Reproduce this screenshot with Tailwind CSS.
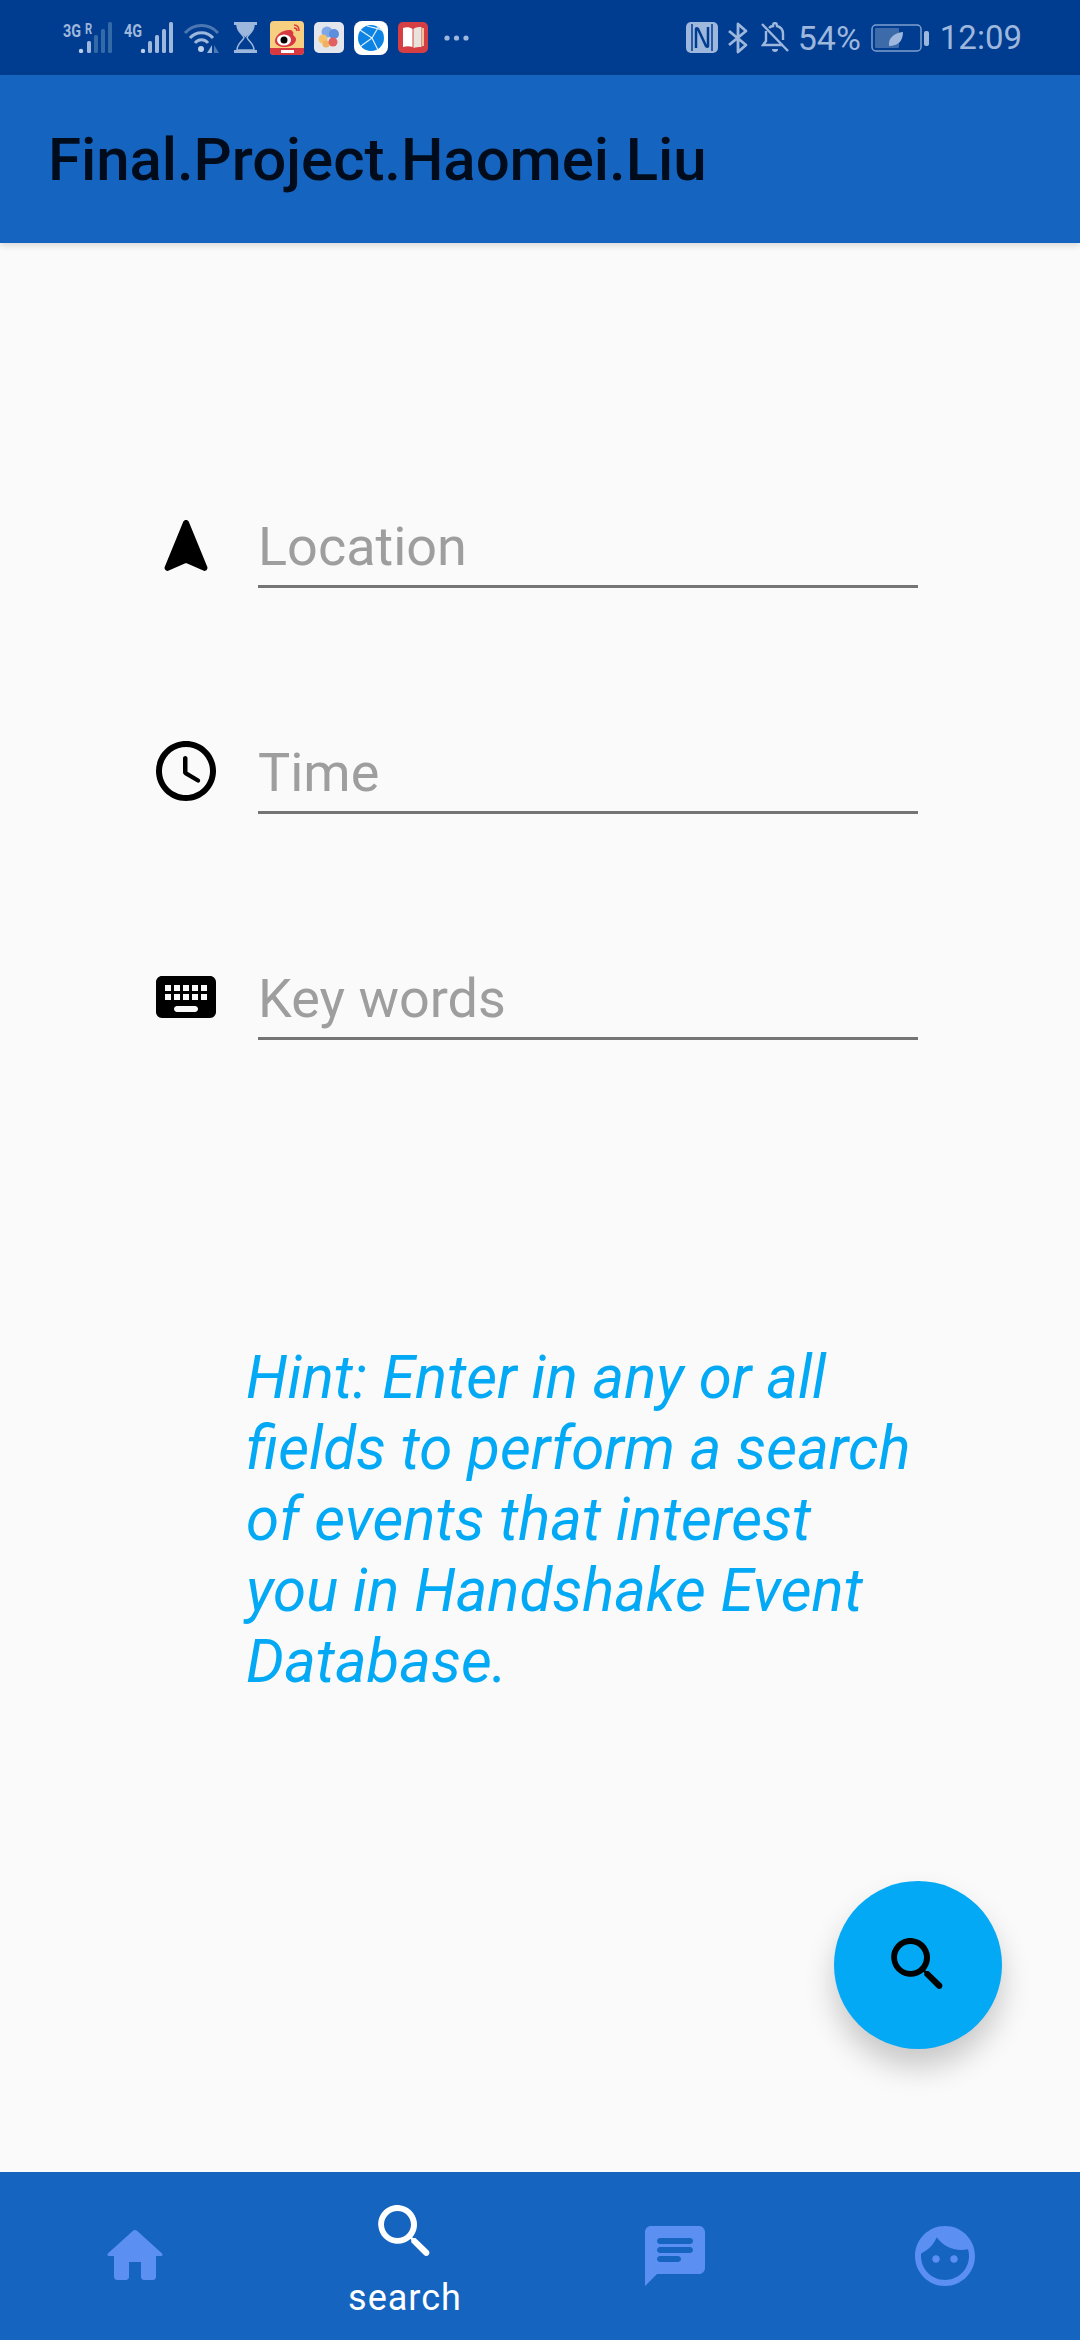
<!DOCTYPE html>
<html>
<head>
<meta charset="utf-8">
<script src="https://cdn.jsdelivr.net/npm/@tailwindcss/browser@4"></script>
</head>
<body class="m-0">
<div class="relative flex h-[2340px] w-[1080px] flex-col overflow-hidden bg-[#fafafa] font-['Roboto',sans-serif]">
  <!-- status bar -->
  <div class="flex h-[75px] shrink-0 items-center justify-between bg-[#003c8f] pl-[63px] pr-[58px] text-[#9db7dd]">
    <div class="flex items-center">
      <div class="relative h-[31px] w-[49px]">
        <span class="absolute left-0 top-0 origin-left scale-x-[0.8] text-[18px] font-bold leading-[18px]">3G</span>
        <span class="absolute left-[22px] top-0 origin-left scale-x-[0.8] text-[14px] font-bold leading-[14px]">R</span>
        <svg width="49" height="31" viewBox="0 0 49 31">
          <circle cx="18" cy="29" r="2.200" fill="#bcd0ea"/><rect x="24" y="19" width="4" height="12" rx="1.500" fill="#9db7dd"/><rect x="31" y="13" width="4" height="18" rx="1.500" fill="#356aa8"/><rect x="38" y="7" width="4" height="24" rx="1.500" fill="#356aa8"/><rect x="45" y="0" width="4" height="31" rx="1.500" fill="#356aa8"/>
        </svg>
      </div>
      <div class="relative ml-[12px] h-[31px] w-[49px]">
        <span class="absolute left-0 top-0 origin-left scale-x-[0.8] text-[18px] font-bold leading-[18px]">4G</span>
        <svg width="49" height="31" viewBox="0 0 49 31">
          <circle cx="19" cy="29" r="2.200" fill="#bcd0ea"/><rect x="24" y="19" width="4" height="12" rx="1.500" fill="#9db7dd"/><rect x="31" y="13" width="4" height="18" rx="1.500" fill="#9db7dd"/><rect x="38" y="7" width="4" height="24" rx="1.500" fill="#9db7dd"/><rect x="45" y="0" width="4" height="31" rx="1.500" fill="#9db7dd"/>
        </svg>
      </div>
      <svg width="37" height="31" viewBox="0 0 37 31" class="ml-[10px]" fill="none">
        <path d="M2 11 A22 22 0 0 1 35 11" stroke="#4b78b2" stroke-width="3"/>
        <path d="M7 16 A15 15 0 0 1 30 16" stroke="#9db7dd" stroke-width="3"/>
        <path d="M12 21 A8 8 0 0 1 25 21" stroke="#9db7dd" stroke-width="3"/>
        <circle cx="18" cy="27" r="3" fill="#bcd0ea"/>
        <path d="M29 23v8h-5z" fill="#9db7dd"/><path d="M31 23v8h5z" fill="#4b78b2"/>
      </svg>
      <svg width="23" height="31" viewBox="0 0 23 31" class="ml-[14px]" fill="none">
        <rect x="0" y="0" width="23" height="3" fill="#9db7dd"/><rect x="0" y="28" width="23" height="3" fill="#9db7dd"/>
        <path d="M3 3h17c0 7-6 9-7 12.500 1 3.500 7 6 7 12.500H3c0-6.500 6-9 7-12.500C9 12 3 10 3 3z" stroke="#9db7dd" stroke-width="1.500"/>
        <path d="M3 3h17c0 7-6 9-8.500 12.500C9 12 3 10 3 3z" fill="#9db7dd"/>
      </svg>
      <svg width="34" height="34" viewBox="0 0 34 34" class="ml-[13px]">
        <rect width="34" height="34" rx="4" fill="#f7cf80"/>
        <path d="M0 27h34v3a4 4 0 0 1-4 4H4a4 4 0 0 1-4-4z" fill="#d8383f"/>
        <rect x="11" y="29" width="13" height="3" fill="#fff"/>
        <path d="M21 9c-8-1-16 5-16 11 0 4 5 6 10 6 7 0 11-4 11-8 0-2-2-3-3-4 1-2 0-4-2-5z" fill="#d8383f"/>
        <ellipse cx="14" cy="19" rx="7" ry="5.500" fill="#fff"/><circle cx="14" cy="19" r="3.500" fill="#000"/>
        <path d="M24 4c3 0 5 2 5 6M24 7c1.500 0 3 1 3 3" stroke="#d8383f" stroke-width="1.500" fill="none"/>
      </svg>
      <svg width="30" height="31" viewBox="0 0 30 31" class="ml-[10px]">
        <rect width="30" height="31" rx="5" fill="#e3e6ec"/>
        <circle cx="13" cy="10" r="5.500" fill="#7fa7e8"/><circle cx="20" cy="12" r="5" fill="#5b8fdc"/>
        <circle cx="9" cy="17" r="4.500" fill="#f5c26b"/><circle cx="12" cy="22" r="3.500" fill="#f0b060"/>
        <circle cx="19" cy="20" r="4.500" fill="#e2605f"/>
      </svg>
      <svg width="34" height="34" viewBox="0 0 34 34" class="ml-[10px]" fill="none">
        <rect width="34" height="34" rx="8" fill="#fff"/>
        <circle cx="17" cy="17" r="13" fill="#0d84e3"/>
        <path d="M6 9l12 8-11 8M18 17l7-12M18 17l6 12M13 5c6 2 12 2 16 5" stroke="#dff0ff" stroke-width="1.200"/>
      </svg>
      <svg width="30" height="31" viewBox="0 0 30 31" class="ml-[10px]">
        <rect width="30" height="31" rx="5" fill="#d53e43"/>
        <path d="M5 6c3-1 7-1 9.500 1v18C12 24 8 24 5 25z" fill="#fff"/>
        <path d="M15.500 7c2-2 6-2 8-2v20c-3 0-6 0-8 1z" fill="#e8e4dc"/>
        <rect x="24" y="6" width="2" height="18" fill="#f2c39a"/>
      </svg>
      <svg width="25" height="6" viewBox="0 0 25 6" class="ml-[16px]" fill="#9db7dd"><circle cx="3" cy="3" r="2.600"/><circle cx="12.500" cy="3" r="2.600"/><circle cx="22" cy="3" r="2.600"/></svg>
    </div>
    <div class="flex items-center">
      <svg width="32" height="31" viewBox="0 0 32 31">
        <rect width="32" height="31" rx="5" fill="#9db7dd"/>
        <path d="M6 2v27M26 2v27" fill="none" stroke="#003c8f" stroke-width="1.500"/>
        <path d="M10 26V7c0-1 1-1 2 0l8 17c1 1 2 1 2 0V5" fill="none" stroke="#003c8f" stroke-width="2.500"/>
      </svg>
      <svg width="20" height="32" viewBox="0 0 20 32" class="ml-[10px]" fill="none"><path d="M1 9l17 14-8 7V2l8 7L1 23" stroke="#9db7dd" stroke-width="2.800" stroke-linejoin="round"/></svg>
      <svg width="28" height="32" viewBox="0 0 28 32" class="ml-[13px]" fill="none">
        <path d="M5 9 v10 l-3 4 h20 M8 6c1-1 3-2 4-2 0-2 1-3 2-3s2 1 2 3c4 1 6 4 6 8v6" stroke="#9db7dd" stroke-width="2.400"/>
        <path d="M11 27c0 2 1 3 3 3s3-1 3-3z" fill="#9db7dd"/><path d="M1 2l26 27" stroke="#9db7dd" stroke-width="2.400"/>
      </svg>
      <span class="ml-[9px] text-[34px] leading-none">54%</span>
      <svg width="58" height="28" viewBox="0 0 58 28" class="ml-[10px]" fill="none">
        <rect x="1" y="1" width="49" height="26" rx="4" stroke="#7f9fcf" stroke-width="1.500"/>
        <rect x="4" y="4" width="24" height="20" rx="1" fill="#3d6aa8"/>
        <rect x="53" y="7" width="5" height="15" rx="2" fill="#9db7dd"/>
        <path d="M18 22c-1-8 5-13 14-14 0 9-5 14-14 14z" fill="#9db7dd"/>
      </svg>
      <span class="ml-[11px] text-[33px] leading-none">12:09</span>
    </div>
  </div>

  <!-- app bar -->
  <header class="z-10 flex h-[168px] shrink-0 items-center bg-[#1565c0] pl-[48px] pt-[2px] shadow-[0_3px_6px_rgba(0,0,0,0.12)]">
    <h1 class="text-[60px] font-medium leading-none tracking-[-0.08px] text-[#000c1c]">Final.Project.Haomei.Liu</h1>
  </header>

  <!-- form -->
  <main class="flex flex-1 flex-col pl-[150px] pt-[119px]">
    <div class="flex h-[226px] items-end">
      <svg width="72" height="72" viewBox="0 0 24 24" class="mb-[7px] shrink-0"><path d="M12.930 4.260l6.150 14.990c.34.83-.51 1.660-1.330 1.290l-5.340-2.360c-.26-.11-.55-.11-.81 0l-5.340 2.360c-.82.360-1.670-.46-1.330-1.290l6.150-14.990c.34-.83 1.510-.83 1.850 0z" fill="#000"/></svg>
      <div class="ml-[36px] h-[73px] w-[660px] border-b-[3px] border-[#757575] text-[54px] leading-[63px] text-[#9e9e9e]">Location</div>
    </div>
    <div class="flex h-[226px] items-end">
      <svg width="72" height="72" viewBox="0 0 24 24" class="mb-[7px] shrink-0"><path d="M11.990 2C6.470 2 2 6.480 2 12s4.470 10 9.990 10C17.520 22 22 17.520 22 12S17.520 2 11.990 2zM12 20c-4.420 0-8-3.580-8-8s3.580-8 8-8 8 3.580 8 8-3.580 8-8 8zm-.22-13h-.06c-.4 0-.72.32-.72.72v4.720c0 .35.18.68.49.86l4.150 2.490c.34.2.78.1.98-.24.21-.34.1-.79-.25-.99l-3.870-2.300V7.720c0-.4-.32-.72-.72-.72z" fill="#000"/></svg>
      <div class="ml-[36px] h-[73px] w-[660px] border-b-[3px] border-[#757575] text-[54px] leading-[63px] text-[#9e9e9e]">Time</div>
    </div>
    <div class="flex h-[226px] items-end">
      <svg width="72" height="72" viewBox="0 0 24 24" class="mb-[7px] shrink-0"><path d="M20 5H4c-1.100 0-1.990.9-1.990 2L2 17c0 1.100.9 2 2 2h16c1.100 0 2-.9 2-2V7c0-1.100-.9-2-2-2zm-9 3h2v2h-2V8zm0 3h2v2h-2v-2zM8 8h2v2H8V8zm0 3h2v2H8v-2zm-1 2H5v-2h2v2zm0-3H5V8h2v2zm8 7H9c-.55 0-1-.45-1-1s.45-1 1-1h6c.55 0 1 .45 1 1s-.45 1-1 1zm1-4h-2v-2h2v2zm0-3h-2V8h2v2zm3 3h-2v-2h2v2zm0-3h-2V8h2v2z" fill="#000"/></svg>
      <div class="ml-[36px] h-[73px] w-[660px] border-b-[3px] border-[#757575] text-[54px] leading-[63px] text-[#9e9e9e]">Key words</div>
    </div>
    <p class="ml-[96px] mt-[302px] text-[60px] italic leading-[71px] text-[#03a9f4]">Hint: Enter in any or all<br>fields to perform a search<br>of events that interest<br>you in Handshake Event<br>Database.</p>
  </main>

  <!-- floating action button -->
  <div class="absolute left-[834px] top-[1881px] flex h-[168px] w-[168px] items-center justify-center rounded-full bg-[#03a9f4] shadow-[0_18px_30px_rgba(0,0,0,0.2)]">
    <svg width="72" height="72" viewBox="0 0 24 24"><path d="M15.500 14h-.79l-.28-.27c1.200-1.400 1.820-3.310 1.480-5.340-.47-2.780-2.790-5-5.590-5.340-4.200-.53-7.710 3-7.180 7.180.34 2.800 2.560 5.120 5.340 5.590 2.030.34 3.940-.28 5.340-1.480l.27.28v.79l4.250 4.250c.41.41 1.080.41 1.490 0 .41-.41.41-1.080 0-1.490L15.500 14zm-6 0C7.010 14 5 11.990 5 9.500S7.010 5 9.500 5 14 7.010 14 9.500 11.990 14 9.500 14z" fill="#000"/></svg>
  </div>

  <!-- bottom nav -->
  <nav class="grid h-[168px] shrink-0 grid-cols-4 bg-[#1565c0]">
    <div class="flex items-center justify-center">
      <svg width="72" height="72" viewBox="0 0 24 24"><path d="M10 19v-5h4v5c0 .55.45 1 1 1h3c.55 0 1-.45 1-1v-7h1.700c.46 0 .68-.57.33-.87L12.670 3.600c-.38-.34-.96-.34-1.340 0l-8.360 7.530c-.34.3-.13.87.33.87H5v7c0 .55.45 1 1 1h3c.55 0 1-.45 1-1z" fill="#5c8ff2"/></svg>
    </div>
    <div class="flex flex-col items-center pt-[24px]">
      <svg width="72" height="72" viewBox="0 0 24 24"><path d="M15.500 14h-.79l-.28-.27c1.200-1.400 1.820-3.310 1.480-5.340-.47-2.780-2.790-5-5.590-5.340-4.200-.53-7.710 3-7.180 7.180.34 2.800 2.560 5.120 5.340 5.590 2.030.34 3.940-.28 5.340-1.480l.27.28v.79l4.250 4.250c.41.41 1.080.41 1.490 0 .41-.41.41-1.080 0-1.490L15.500 14zm-6 0C7.010 14 5 11.990 5 9.500S7.010 5 9.500 5 14 7.010 14 9.500 11.990 14 9.500 14z" fill="#fff"/></svg>
      <span class="mt-[11px] text-[36px] leading-[39px] tracking-[1px] text-white">search</span>
    </div>
    <div class="flex items-center justify-center">
      <svg width="72" height="72" viewBox="0 0 24 24"><path d="M20 2H4c-1.100 0-2 .9-2 2v18l4-4h14c1.100 0 2-.9 2-2V4c0-1.100-.9-2-2-2zM7 9h10c.55 0 1 .45 1 1s-.45 1-1 1H7c-.55 0-1-.45-1-1s.45-1 1-1zm6 5H7c-.55 0-1-.45-1-1s.45-1 1-1h6c.55 0 1 .45 1 1s-.45 1-1 1zm4-6H7c-.55 0-1-.45-1-1s.45-1 1-1h10c.55 0 1 .45 1 1s-.45 1-1 1z" fill="#5c8ff2"/></svg>
    </div>
    <div class="flex items-center justify-center">
      <svg width="72" height="72" viewBox="0 0 24 24"><path d="M9 11.750c-.69 0-1.250.56-1.250 1.250s.56 1.250 1.250 1.250 1.250-.56 1.250-1.250-.56-1.250-1.250-1.250zm6 0c-.69 0-1.250.56-1.250 1.250s.56 1.250 1.250 1.250 1.250-.56 1.250-1.250-.56-1.250-1.250-1.250zM12 2C6.480 2 2 6.480 2 12s4.480 10 10 10 10-4.480 10-10S17.520 2 12 2zm0 18c-4.410 0-8-3.590-8-8 0-.29.02-.58.05-.86 2.360-1.050 4.230-2.980 5.210-5.370C11.070 8.330 14.050 10 17.420 10c.78 0 1.530-.09 2.250-.26.21.71.33 1.470.33 2.260 0 4.410-3.590 8-8 8z" fill="#5c8ff2"/></svg>
    </div>
  </nav>
</div>
</body>
</html>
